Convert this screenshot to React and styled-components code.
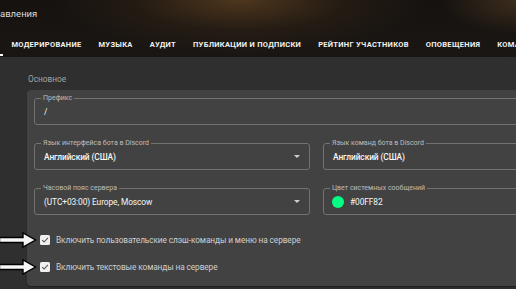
import React from "react";
import styled, { createGlobalStyle } from "styled-components";

const GlobalStyle = createGlobalStyle`
  html, body { margin: 0; padding: 0; background: #2f2f2f; overflow: hidden; }
  body { font-family: Roboto, "Noto Sans", "Liberation Sans", sans-serif; }
  * { box-sizing: border-box; }
`;

const Page = styled.div`
  width: 640px;
  min-height: 289px;
  background: #2f2f2f;
`;

const Header = styled.header`
  height: 57px;
  padding-top: 6px;
  background:
    radial-gradient(ellipse 190px 55px at 240px 0px, rgba(84, 58, 30, 0.9), rgba(52, 38, 22, 0.45) 55%, transparent 100%),
    radial-gradient(ellipse 80px 35px at 520px 0px, rgba(80, 58, 34, 0.7), transparent 100%),
    linear-gradient(180deg, #151210 0%, #1a1613 100%);
`;

const Subtitle = styled.div`
  font-size: 9.5px;
  line-height: 16px;
  color: #dcdcdc;
`;

const TabRow = styled.nav`
  position: relative;
  display: flex;
  align-items: center;
  height: 21px;
  margin-top: 12px;
  padding-left: 3px;
  white-space: nowrap;
`;

const Tab = styled.span`
  padding: 0 8.5px;
  font-size: 7.5px;
  font-weight: 700;
  letter-spacing: 0.3px;
  color: #f2f2f2;
  text-transform: uppercase;
`;

const Indicator = styled.span`
  position: absolute;
  left: 0;
  bottom: -1px;
  width: 3px;
  height: 2px;
  background: #ffffff;
`;

const Content = styled.main`
  padding: 16px 0 0 27px;
`;

const SectionTitle = styled.div`
  font-size: 8.3px;
  line-height: 12px;
  color: #a3a3a3;
  padding-left: 1px;
  margin-bottom: 5px;
`;

const Card = styled.section`
  background: #424242;
  border-radius: 4px;
  padding: 8px 7px 14px;
  display: flex;
  flex-direction: column;
  gap: 18px;
  box-shadow: 0 1px 1px rgba(0,0,0,0.35);
`;

const Grid = styled.div`
  display: grid;
  grid-template-columns: ${(p) => (p.$cols === 2 ? "276px 276px" : "565px")};
  column-gap: 13px;
`;

const Field = styled.div`
  position: relative;
  height: 27px;
  border: 1px solid #727272;
  border-radius: 3px;
  display: flex;
  align-items: center;
  padding-left: 8px;
  padding-right: 8px;
  gap: 5px;
`;

const Label = styled.span`
  position: absolute;
  top: -5px;
  left: 6px;
  padding: 0 2px;
  background: #424242;
  font-size: 7px;
  line-height: 9px;
  color: #bdbdbd;
  white-space: nowrap;
`;

const Value = styled.span`
  flex: 1;
  font-size: 8.4px;
  letter-spacing: -0.1px;
  font-weight: ${(p) => (p.$bold ? 500 : 400)};
  color: #f6f6f6;
  white-space: nowrap;
  padding-top: 1px;
  padding-left: 1px;
`;

const Caret = styled.span`
  width: 0;
  height: 0;
  border-left: 3px solid transparent;
  border-right: 3px solid transparent;
  border-top: 3px solid #cfcfcf;
  margin-right: 1px;
`;

const Swatch = styled.span`
  width: 12px;
  height: 12px;
  border-radius: 50%;
  background: ${(p) => p.$color};
`;

const Checks = styled.div`
  display: flex;
  flex-direction: column;
  gap: 17px;
  padding-top: 2px;
  padding-left: 6px;
`;

const CheckRow = styled.label`
  position: relative;
  display: flex;
  align-items: center;
  gap: 6px;
  height: 10px;
`;

const Box = styled.span`
  width: 10px;
  height: 10px;
  border-radius: 1.5px;
  background: #f0f0f0;
  display: flex;
  align-items: center;
  justify-content: center;
`;

const CheckText = styled.span`
  font-size: 8.3px;
  letter-spacing: -0.1px;
  color: #cfcfcf;
  white-space: nowrap;
`;

const Arrow = styled.svg`
  position: absolute;
  left: -41px;
  top: -3px;
`;

const tabs = [
  "Модерирование",
  "Музыка",
  "Аудит",
  "Публикации и подписки",
  "Рейтинг участников",
  "Оповещения",
  "Команды",
];

function CheckItem({ children }) {
  return (
    <CheckRow>
      <Arrow width="38" height="16" viewBox="0 0 38 16">
        <path
          d="M0.5 5.5 H24 V1 L36.5 8 L24 15 V10.5 H0.5 Z"
          fill="#f6f6f6"
          stroke="#000"
          strokeWidth="1.4"
          strokeLinejoin="miter"
        />
      </Arrow>
      <Box>
        <svg width="8" height="8" viewBox="0 0 8 8">
          <path d="M1.2 4.2 L3.1 6 L6.9 1.8" fill="none" stroke="#555" strokeWidth="1.1" />
        </svg>
      </Box>
      <CheckText>{children}</CheckText>
    </CheckRow>
  );
}

export default function App() {
  return (
    <Page>
      <GlobalStyle />
      <Header>
        <Subtitle>авления</Subtitle>
        <TabRow>
          <Indicator />
          {tabs.map((t) => (
            <Tab key={t}>{t}</Tab>
          ))}
        </TabRow>
      </Header>
      <Content>
        <SectionTitle>Основное</SectionTitle>
        <Card>
          <Grid $cols={1}>
            <Field>
              <Label>Префикс</Label>
              <Value>/</Value>
            </Field>
          </Grid>
          <Grid $cols={2}>
            <Field>
              <Label>Язык интерфейса бота в Discord</Label>
              <Value $bold>Английский (США)</Value>
              <Caret />
            </Field>
            <Field>
              <Label>Язык команд бота в Discord</Label>
              <Value $bold>Английский (США)</Value>
              <Caret />
            </Field>
          </Grid>
          <Grid $cols={2}>
            <Field>
              <Label>Часовой пояс сервера</Label>
              <Value>(UTC+03:00) Europe, Moscow</Value>
              <Caret />
            </Field>
            <Field>
              <Label>Цвет системных сообщений</Label>
              <Swatch $color="#00ff82" />
              <Value>#00FF82</Value>
            </Field>
          </Grid>
          <Checks>
            <CheckItem>Включить пользовательские слэш-команды и меню на сервере</CheckItem>
            <CheckItem>Включить текстовые команды на сервере</CheckItem>
          </Checks>
        </Card>
      </Content>
    </Page>
  );
}
